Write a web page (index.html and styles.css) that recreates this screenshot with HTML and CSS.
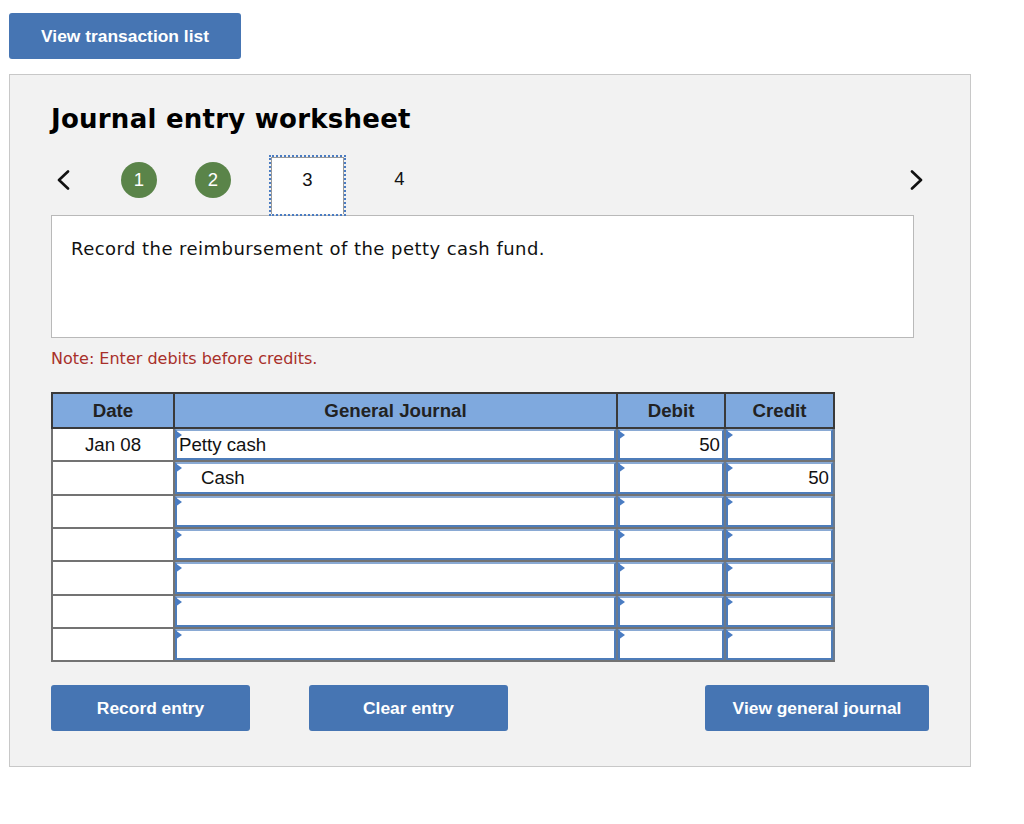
FILE: index.html
```html
<!DOCTYPE html>
<html>
<head>
<meta charset="utf-8">
<link rel="stylesheet" href="styles.css">
</head>
<body>
<button class="btn btn-top">View transaction list</button>
<div class="panel">
  <h1 class="title">Journal entry worksheet</h1>
  <div class="nav">
    <svg class="chev chev-left" width="14" height="20" viewBox="0 0 14 20"><polyline points="12,1.5 3,10 12,18.5" fill="none" stroke="#111" stroke-width="2.6" stroke-linecap="round" stroke-linejoin="round"/></svg>
    <span class="dot dot-1">1</span>
    <span class="dot dot-2">2</span>
    <span class="tab tab-active">3</span>
    <span class="tab">4</span>
    <svg class="chev chev-right" width="14" height="20" viewBox="0 0 14 20"><polyline points="2,1.5 11,10 2,18.5" fill="none" stroke="#111" stroke-width="2.6" stroke-linecap="round" stroke-linejoin="round"/></svg>
  </div>
  <div class="instr">Record the reimbursement of the petty cash fund.</div>
  <div class="note">Note: Enter debits before credits.</div>
  <table class="jt">
    <thead>
      <tr><th class="c-date">Date</th><th class="c-gj">General Journal</th><th class="c-dr">Debit</th><th class="c-cr">Credit</th></tr>
    </thead>
    <tbody>
      <tr>
        <td class="date">Jan 08</td>
        <td class="inp"><div class="box"><span class="tri"></span>Petty cash</div></td>
        <td class="inp"><div class="box num"><span class="tri"></span>50</div></td>
        <td class="inp"><div class="box num"><span class="tri"></span></div></td>
      </tr>
      <tr>
        <td class="date"></td>
        <td class="inp"><div class="box indent"><span class="tri"></span>Cash</div></td>
        <td class="inp"><div class="box num"><span class="tri"></span></div></td>
        <td class="inp"><div class="box num"><span class="tri"></span>50</div></td>
      </tr>
      <tr>
        <td class="date"></td>
        <td class="inp"><div class="box"><span class="tri"></span></div></td>
        <td class="inp"><div class="box num"><span class="tri"></span></div></td>
        <td class="inp"><div class="box num"><span class="tri"></span></div></td>
      </tr>
      <tr>
        <td class="date"></td>
        <td class="inp"><div class="box"><span class="tri"></span></div></td>
        <td class="inp"><div class="box num"><span class="tri"></span></div></td>
        <td class="inp"><div class="box num"><span class="tri"></span></div></td>
      </tr>
      <tr>
        <td class="date"></td>
        <td class="inp"><div class="box"><span class="tri"></span></div></td>
        <td class="inp"><div class="box num"><span class="tri"></span></div></td>
        <td class="inp"><div class="box num"><span class="tri"></span></div></td>
      </tr>
      <tr>
        <td class="date"></td>
        <td class="inp"><div class="box"><span class="tri"></span></div></td>
        <td class="inp"><div class="box num"><span class="tri"></span></div></td>
        <td class="inp"><div class="box num"><span class="tri"></span></div></td>
      </tr>
      <tr>
        <td class="date"></td>
        <td class="inp"><div class="box"><span class="tri"></span></div></td>
        <td class="inp"><div class="box num"><span class="tri"></span></div></td>
        <td class="inp"><div class="box num"><span class="tri"></span></div></td>
      </tr>
    </tbody>
  </table>
  <div class="actions">
    <button class="btn btn-record">Record entry</button>
    <button class="btn btn-clear">Clear entry</button>
    <button class="btn btn-view">View general journal</button>
  </div>
</div>
</body>
</html>
```
FILE: styles.css
```css
html, body {
  margin: 0;
  padding: 0;
  background: #ffffff;
}
body {
  font-family: "Liberation Sans", Arial, sans-serif;
  color: #111;
  padding: 13px 0 0 9px;
}
.btn {
  display: flex;
  align-items: center;
  justify-content: center;
  border: none;
  border-radius: 3px;
  background: #4675b3;
  color: #fff;
  font-family: "Liberation Sans", Arial, sans-serif;
  font-weight: bold;
  font-size: 17.4px;
  height: 46px;
  padding: 0;
}
.btn-top {
  width: 232px;
  height: 46px;
}
.panel {
  margin-top: 15px;
  width: 962px;
  box-sizing: border-box;
  background: #f2f2f2;
  border: 1px solid #c8c8c8;
  padding: 29px 41px 35px 41px;
}
.title {
  margin: 0;
  font-family: "DejaVu Sans", Verdana, sans-serif;
  font-weight: bold;
  font-size: 26px;
  letter-spacing: 0.25px;
  line-height: 30px;
  height: 30px;
  color: #000;
}
.nav {
  margin-top: 21px;
  height: 60px;
  display: flex;
  align-items: flex-start;
  font-family: "Liberation Sans", Arial, sans-serif;
  font-size: 18.5px;
}
.chev {
  margin-top: 15px;
  flex: none;
}
.chev-left {
  margin-left: 5px;
}
.chev-right {
  margin-left: auto;
  margin-right: 5px;
}
.dot {
  flex: none;
  width: 36px;
  height: 36px;
  border-radius: 50%;
  background: #5a8449;
  color: #fff;
  display: flex;
  align-items: center;
  justify-content: center;
  margin-top: 7px;
}
.dot-1 { margin-left: 51px; }
.dot-2 { margin-left: 38px; }
.tab {
  flex: none;
  box-sizing: border-box;
  width: 73px;
  height: 57px;
  margin-top: 2px;
  padding-top: 11px;
  line-height: 22px;
  text-align: center;
  color: #111;
  margin-left: 19px;
}
.tab-active {
  margin-left: 40px;
  background: #fff;
  border: 1px solid #9a9a9a;
  border-bottom: none;
  outline: 2px dotted #4a7cc2;
  position: relative;
  z-index: 1;
}
.instr {
  width: 863px;
  height: 123px;
  box-sizing: border-box;
  background: #fff;
  border: 1px solid #b9b9b9;
  padding: 22px 19px;
  font-family: "DejaVu Sans", Verdana, sans-serif;
  font-size: 18px;
  letter-spacing: 0.45px;
  line-height: 22px;
  color: #111;
}
.note {
  margin-top: 11px;
  font-family: "DejaVu Sans", Verdana, sans-serif;
  font-size: 16px;
  line-height: 20px;
  color: #a8302a;
}
.jt {
  margin-top: 23px;
  border-collapse: collapse;
  table-layout: fixed;
  width: 779px;
  font-size: 18.7px;
}
.jt th {
  background: #7fa9de;
  border: 2px solid #3a3a3a;
  height: 33px;
  padding: 0;
  font-weight: bold;
  color: #222;
  text-align: center;
}
.c-date { width: 120px; }
.c-gj { width: 441px; }
.c-dr { width: 106px; }
.c-cr { width: 107px; }
.jt td {
  border: 2px solid #737373;
  padding: 0;
  height: 31.33px;
  background: #fff;
}
.jt td.date {
  text-align: center;
  color: #111;
}
.jt td.inp {
  background: #4d7cb9;
  border-left-color: #6c7a8c;
  border-right-color: #6c7a8c;
}
.box {
  position: relative;
  box-sizing: border-box;
  height: 31.33px;
  border: 2px solid #4d7cb9;
  border-top-color: #8aaad4;
  background: #fff;
  display: flex;
  align-items: center;
  padding: 0 2px;
  color: #111;
  white-space: nowrap;
}
.box.indent {
  padding-left: 24px;
}
.box.num {
  justify-content: flex-end;
  padding-right: 2px;
}
.tri {
  position: absolute;
  left: -2px;
  top: -1px;
  width: 0;
  height: 0;
  border-top: 5px solid transparent;
  border-bottom: 5px solid transparent;
  border-left: 7px solid #4a7cc2;
}
.actions {
  margin-top: 23px;
  display: flex;
  align-items: center;
}
.btn-record { width: 199px; }
.btn-clear { width: 199px; margin-left: 59px; }
.btn-view { width: 224px; margin-left: auto; }
```
